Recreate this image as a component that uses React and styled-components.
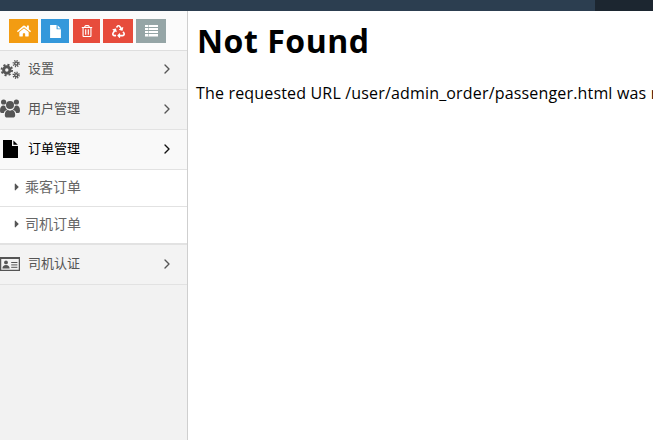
import React from 'react';
import styled, { createGlobalStyle } from 'styled-components';
import { FaHome, FaRegTrashAlt, FaRecycle, FaCaretRight } from 'react-icons/fa';
import { LuChevronRight } from 'react-icons/lu';

const GlobalStyle = createGlobalStyle`
  html, body {
    margin: 0;
    height: 100%;
    overflow: hidden;
    background: #fff;
  }
  #root {
    height: 100%;
  }
`;

const Page = styled.div`
  display: flex;
  flex-direction: column;
  width: 653px;
  height: 440px;
  overflow: hidden;
  font-family: "Open Sans", "Noto Sans CJK SC", sans-serif;
`;

const TopBar = styled.div`
  display: flex;
  justify-content: flex-end;
  flex: 0 0 11px;
  background: #2c3e50;
`;

const TopBarEnd = styled.div`
  width: 58px;
  background: #1c2630;
`;

const Body = styled.div`
  display: flex;
  flex: 1;
  min-height: 0;
`;

const Sidebar = styled.aside`
  flex: 0 0 188px;
  box-sizing: border-box;
  background: #f2f2f2;
  border-right: 1px solid #cfcfcf;
`;

const Shortcuts = styled.div`
  display: flex;
  gap: 3px;
  box-sizing: border-box;
  height: 40px;
  padding: 8px 0 0 9px;
  background: #fbfbfb;
  border-bottom: 1px solid #dedede;
`;

const ShortcutButton = styled.div`
  display: flex;
  align-items: center;
  justify-content: center;
  width: ${(p) => p.$w}px;
  height: 24px;
  margin-left: ${(p) => p.$ml || 0}px;
  color: #fff;
  font-size: ${(p) => p.$size || 12}px;
  background: ${(p) => p.$bg};
`;

const MenuRow = styled.div`
  display: flex;
  align-items: center;
  box-sizing: border-box;
  height: ${(p) => p.$h || 40}px;
  padding-bottom: 4px;
  background: ${(p) => (p.$active ? '#f9f9f9' : '#f3f3f3')};
  border-bottom: 1px solid #e2e2e2;
  color: ${(p) => (p.$active ? '#000' : '#555')};
`;

const MenuIcon = styled.span`
  display: flex;
  align-items: center;
  justify-content: center;
  flex: 0 0 20px;
  margin-top: 2px;
  color: ${(p) => (p.$active ? '#000' : '#555')};
`;

const MenuLabel = styled.span`
  flex: 1;
  margin-left: 8px;
  font-size: 13px;
  line-height: 18px;
`;

const Arrow = styled.span`
  display: flex;
  margin: 2px 12px 0 0;
  font-size: 16px;
  color: ${(p) => (p.$active ? '#111' : '#555')};
`;

const SubRow = styled.div`
  display: flex;
  align-items: center;
  box-sizing: border-box;
  height: ${(p) => p.$h}px;
  padding: 0 0 4px 11px;
  background: #fff;
  border-bottom: ${(p) => p.$b || 1}px solid #e2e2e2;
  color: #666;
  font-size: 14px;
`;

const Caret = styled.span`
  display: flex;
  width: 14px;
  margin-top: 1px;
  font-size: 12px;
  color: #555;
`;

const Content = styled.main`
  flex: 1;
  min-width: 0;
  padding: 0 0 0 8px;
  overflow: hidden;
  color: #000;
  white-space: nowrap;
`;

const Title = styled.h1`
  margin: 9px 0 0 1px;
  font-size: 32px;
  line-height: 42px;
  font-weight: 700;
  letter-spacing: 0.55px;
`;

const Message = styled.p`
  margin: 20px 0 0;
  font-size: 16px;
  line-height: 22px;
  letter-spacing: 0.17px;
`;

const FileIcon = ({ w, h }) => (
  <svg width={w} height={h} viewBox="0 0 15 18" fill="currentColor">
    <path d="M0 0H9V6H15V18H0Z" />
    <path d="M10.4 0.4L14.8 4.8H10.4Z" />
  </svg>
);

const ListIcon = () => (
  <svg width="13" height="12" viewBox="0 0 13 12" fill="#fff">
    <rect y="0" width="13" height="2" />
    <rect y="3" width="13" height="2" />
    <rect y="6" width="13" height="2" />
    <rect y="9" width="13" height="2.5" />
    <rect x="3" y="0" width="0.6" height="11.5" fill="#95a5a6" />
  </svg>
);

const Gear = ({ cx, cy, r, w }) => {
  const teeth = 2 * Math.PI * (r + w / 2 + 0.6);
  return (
    <g fill="none" stroke="currentColor">
      <circle cx={cx} cy={cy} r={r} strokeWidth={w} />
      <circle cx={cx} cy={cy} r={r + w / 2 + 0.6} strokeWidth="1.8" strokeDasharray={`${teeth / 16} ${teeth / 16}`} />
    </g>
  );
};

const CogsIcon = () => (
  <svg width="20" height="19" viewBox="0 0 20 19">
    <Gear cx={6.8} cy={10} r={3.2} w={3} />
    <Gear cx={16.2} cy={3.6} r={1.5} w={1.4} />
    <Gear cx={16.2} cy={15.2} r={1.5} w={1.4} />
  </svg>
);

const UsersIcon = () => (
  <svg width="20" height="19" viewBox="0 0 20 19" fill="currentColor">
    <circle cx="3.6" cy="3" r="2.6" />
    <circle cx="16.4" cy="3" r="2.6" />
    <circle cx="10" cy="6" r="4" />
    <path d="M0 11.5C0 8 1.5 6.6 3.6 6.6C4.4 6.6 4.9 6.9 5.3 7.3C5.5 9 6.4 10.2 7.4 10.8C5.4 11.4 4.2 12.4 3.9 14H1.6C0.6 14 0 13.2 0 11.5Z" />
    <path d="M20 11.5C20 8 18.5 6.6 16.4 6.6C15.6 6.6 15.1 6.9 14.7 7.3C14.5 9 13.6 10.2 12.6 10.8C14.6 11.4 15.8 12.4 16.1 14H18.4C19.4 14 20 13.2 20 11.5Z" />
    <path d="M4.8 16C4.8 12.8 6.6 11 8 11C8.8 11.6 9.4 11.8 10 11.8C10.6 11.8 11.2 11.6 12 11C13.4 11 15.2 12.8 15.2 16C15.2 17.8 14.2 18.6 13 18.6H7C5.8 18.6 4.8 17.8 4.8 16Z" />
  </svg>
);

const CardIcon = () => (
  <svg width="20" height="14" viewBox="0 0 20 14">
    <rect x="0.6" y="0.9" width="18.8" height="12.5" fill="none" stroke="currentColor" strokeWidth="1.3" />
    <rect x="0" y="0" width="20" height="2" fill="currentColor" />
    <circle cx="6" cy="5.4" r="1.9" fill="currentColor" />
    <path d="M2.4 11.6C2.4 9.2 3.8 8 6 8C8.2 8 9.6 9.2 9.6 11.6Z" fill="currentColor" />
    <rect x="11.2" y="5" width="6.2" height="1" fill="currentColor" />
    <rect x="11.2" y="7.4" width="6.2" height="1" fill="currentColor" />
    <rect x="11.2" y="9.8" width="6.2" height="1" fill="currentColor" />
  </svg>
);

const shortcuts = [
  { w: 29, bg: '#f39c12', size: 14, icon: <FaHome /> },
  { w: 28, bg: '#3498db', icon: <FileIcon w={11} h={13} /> },
  { w: 27, bg: '#e74c3c', ml: 1, icon: <FaRegTrashAlt /> },
  { w: 30, bg: '#e74c3c', size: 13, icon: <FaRecycle /> },
  { w: 30, bg: '#95a5a6', icon: <ListIcon /> },
];

const Item = ({ icon, label, active, h }) => (
  <MenuRow $active={active} $h={h}>
    <MenuIcon $active={active}>{icon}</MenuIcon>
    <MenuLabel>{label}</MenuLabel>
    <Arrow $active={active}><LuChevronRight /></Arrow>
  </MenuRow>
);

const Sub = ({ label, h, b }) => (
  <SubRow $h={h} $b={b}>
    <Caret><FaCaretRight /></Caret>
    {label}
  </SubRow>
);

export default function App() {
  return (
    <>
      <GlobalStyle />
      <Page>
        <TopBar><TopBarEnd /></TopBar>
        <Body>
          <Sidebar>
            <Shortcuts>
              {shortcuts.map((s, i) => (
                <ShortcutButton key={i} $w={s.w} $bg={s.bg} $ml={s.ml} $size={s.size}>{s.icon}</ShortcutButton>
              ))}
            </Shortcuts>
            <Item icon={<CogsIcon />} label="设置" h={39} />
            <Item icon={<UsersIcon />} label="用户管理" />
            <Item icon={<FileIcon w={15} h={18} />} label="订单管理" active />
            <Sub label="乘客订单" h={37} />
            <Sub label="司机订单" h={38} b={2} />
            <Item icon={<CardIcon />} label="司机认证" />
          </Sidebar>
          <Content>
            <Title>Not Found</Title>
            <Message>The requested URL /user/admin_order/passenger.html was not found on this server.</Message>
          </Content>
        </Body>
      </Page>
    </>
  );
}
